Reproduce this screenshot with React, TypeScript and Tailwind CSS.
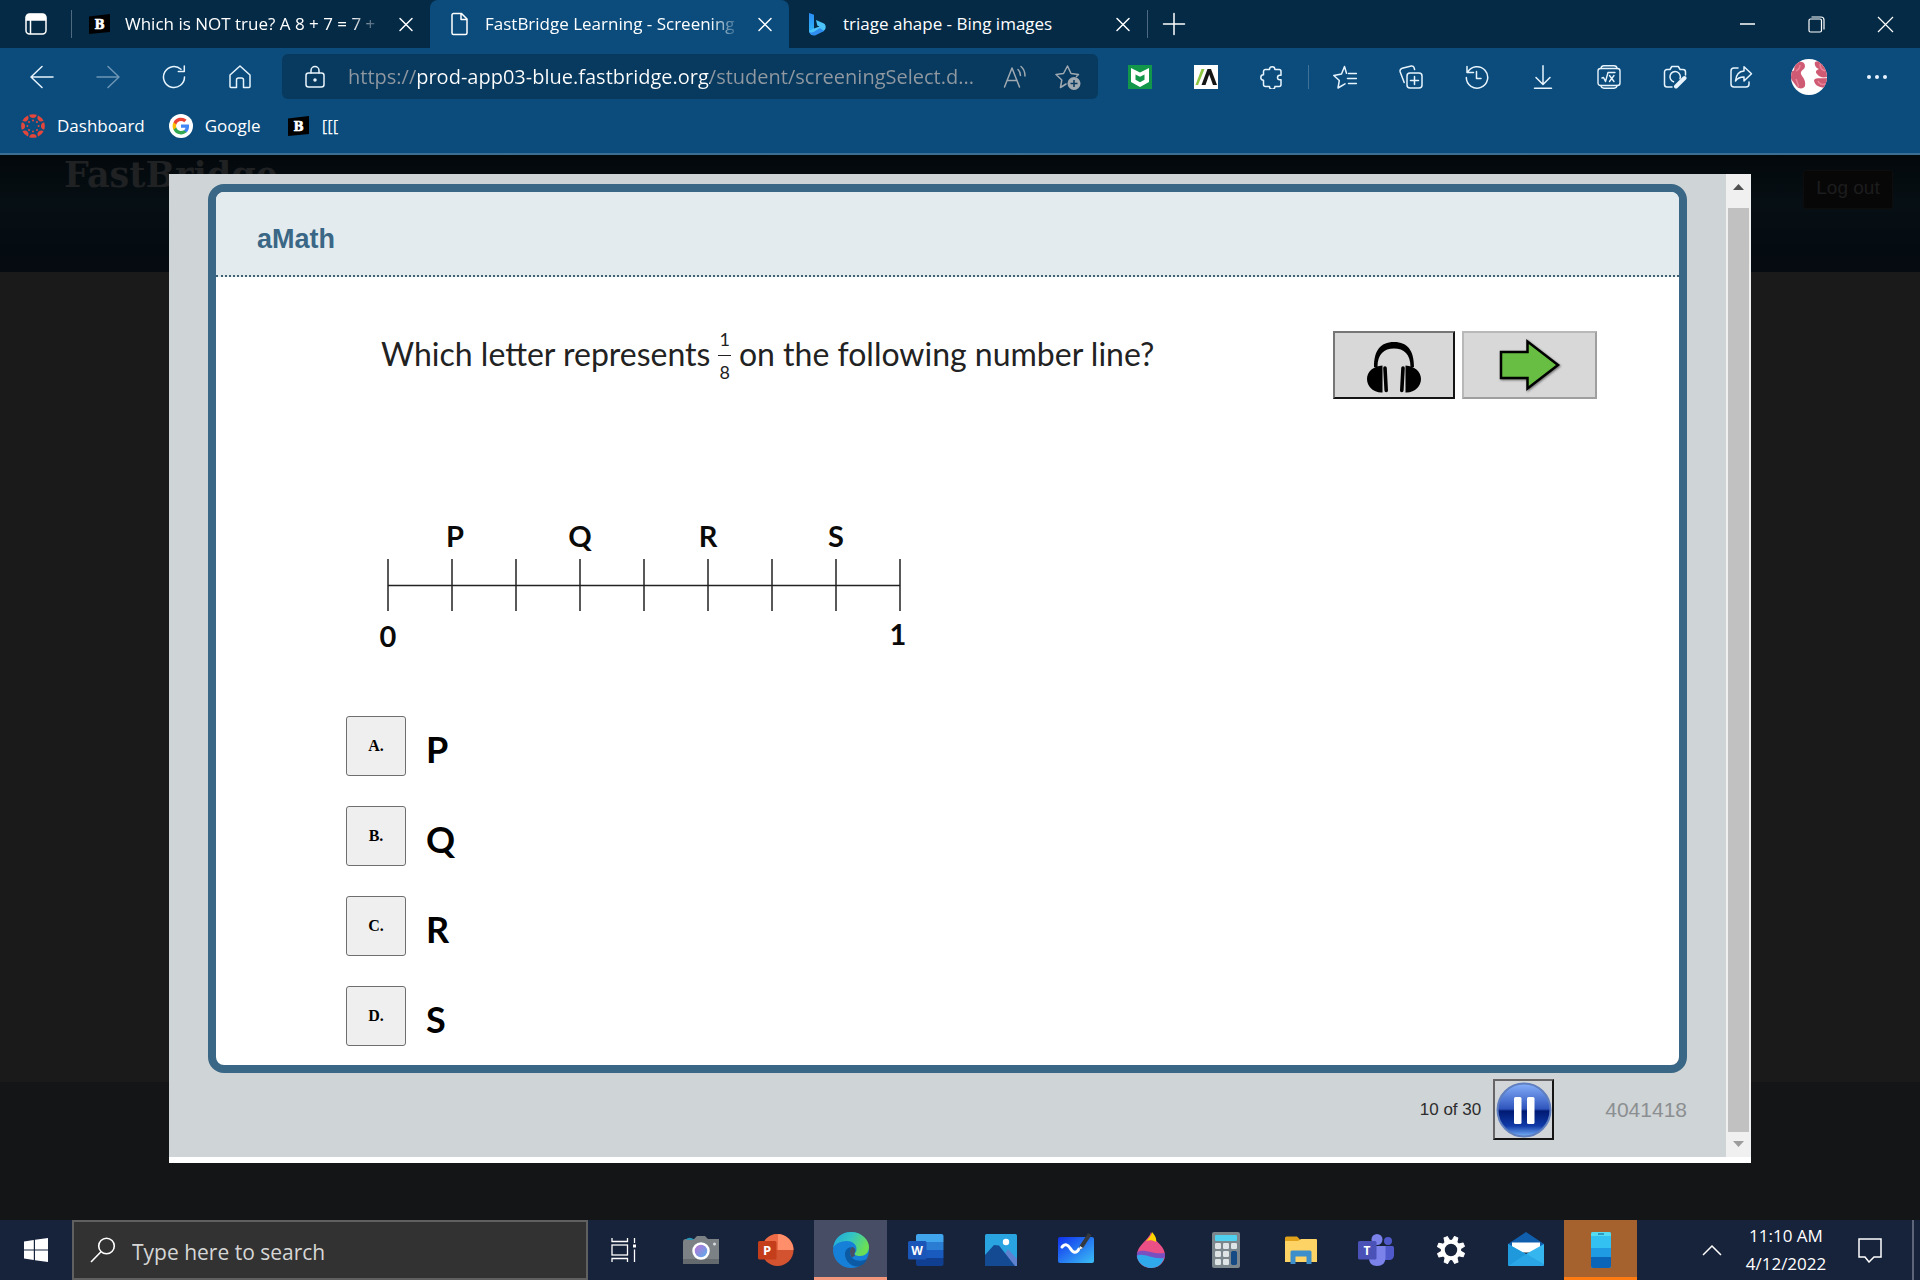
import React from "react";
import type { ReactNode } from "react";

const UI = "font-['Open_Sans','Noto_Sans',sans-serif]";

function Line({ children, size = 24, width = 1.5, box = 24 }: { children: ReactNode; size?: number; width?: number; box?: number }) {
  return (
    <svg width={size} height={size} viewBox={`0 0 ${box} ${box}`} fill="none" stroke="currentColor" strokeWidth={width} strokeLinecap="round" strokeLinejoin="round" aria-hidden="true">
      {children}
    </svg>
  );
}

function BrainlyMark() {
  return (
    <svg width="22" height="22" viewBox="0 0 22 22" className="shrink-0" aria-hidden="true">
      <path d="M0 3.500L21 1v18L0 21z" fill="#000" />
      <text x="10.500" y="15.500" textAnchor="middle" fontFamily="DejaVu Serif, serif" fontWeight="700" fontSize="12" fill="#fff" stroke="#fff" strokeWidth="0.6">B</text>
    </svg>
  );
}

function CloseX() {
  return (
    <Line size={24}>
      <path d="M6 6.500l12 12M18 6.500l-12 12" />
    </Line>
  );
}

function Tab({ icon, title, active, fade }: { icon: ReactNode; title: string; active?: boolean; fade?: boolean }) {
  return (
    <div
      role="tab"
      aria-selected={!!active}
      className={
        active
          ? "flex w-[359px] items-center rounded-t-lg bg-[#0b4c7c] pl-[18px] pr-3"
          : "flex w-[358px] items-center pl-[16px] pr-3"
      }
    >
      <span className="flex w-6 shrink-0 justify-center">{icon}</span>
      <span
        className={
          fade
            ? "ml-[13px] min-w-0 flex-1 whitespace-nowrap text-[17px] leading-6 text-white [mask-image:linear-gradient(90deg,#000_88%,transparent)]"
            : "ml-[14px] min-w-0 flex-1 whitespace-nowrap text-[17px] leading-6 text-white"
        }
      >
        {title}
      </span>
      <button type="button" aria-label={`Close ${title}`} className="ml-3 shrink-0 text-white">
        <CloseX />
      </button>
    </div>
  );
}

function TabStrip() {
  return (
    <div className="flex h-12 bg-[#052a46] text-white">
      <button type="button" aria-label="Tab actions" className="flex w-[71px] items-center justify-center">
        <svg width="24" height="24" viewBox="0 0 24 24" fill="none" stroke="#fff" strokeWidth="1.5" aria-hidden="true">
          <rect x="2" y="2" width="20" height="20" rx="3.500" />
          <path d="M2.500 8V5.500a3 3 0 0 1 3-3h13a3 3 0 0 1 3 3V8z" fill="#fff" />
          <path d="M6.500 8v14" />
        </svg>
      </button>
      <div className="my-[10px] w-px bg-[#4d6a80]" />
      <div role="tablist" className="flex">
        <Tab icon={<BrainlyMark />} title="Which is NOT true? A 8 + 7 = 7 +" fade />
        <Tab
          active
          fade
          title="FastBridge Learning - Screening"
          icon={
            <Line size={26}>
              <path d="M5.500 1.500h8l5.500 5.500v14a1.500 1.500 0 0 1-1.500 1.500h-12A1.500 1.500 0 0 1 4 21V3a1.500 1.500 0 0 1 1.500-1.500zM13 1.500V7.500h6" />
            </Line>
          }
        />
        <Tab
          title="triage ahape - Bing images"
          icon={
            <svg width="24" height="24" viewBox="0 0 24 24" aria-hidden="true">
              <defs>
                <linearGradient id="bing" x1="0" y1="0" x2="0" y2="1">
                  <stop offset="0" stopColor="#2b8df5" />
                  <stop offset="1" stopColor="#2fb7f8" />
                </linearGradient>
              </defs>
              <path d="M4 1l5 1.800v13.800L6 21.500 4 19z" fill="url(#bing)" />
              <path d="M11 8l8 3.500c2.500 2 2.200 6-.5 7.500L9 23c-2.500.5-4.500-1-5-4l5-2.500 5.500-2-2.200-1z" fill="#4cc4fa" />
              <path d="M4 19c1 2 3 2 5 .8L15 16l4 3-9 4.500C7 24 4.500 22 4 19z" fill="#2f8df0" />
            </svg>
          }
        />
      </div>
      <div className="my-[10px] w-px bg-[#4d6a80]" />
      <button type="button" aria-label="New tab" className="flex w-[52px] items-center justify-center">
        <Line>
          <path d="M12 1.500v21M1.500 12h21" />
        </Line>
      </button>
      <div className="ml-auto flex">
        <button type="button" aria-label="Minimize" className="flex w-[69px] items-center justify-center">
          <svg width="16" height="16" aria-hidden="true"><path d="M0 8h15" stroke="#fff" strokeWidth="1.500" /></svg>
        </button>
        <button type="button" aria-label="Restore" className="flex w-[69px] items-center justify-center">
          <svg width="17" height="17" fill="none" stroke="#fff" strokeWidth="1.2" aria-hidden="true">
            <rect x="1" y="3" width="12.500" height="13" rx="1.500" />
            <path d="M3.500 1h9.500a3 3 0 0 1 3 3v9.500" />
          </svg>
        </button>
        <button type="button" aria-label="Close window" className="flex w-[69px] items-center justify-center">
          <svg width="17" height="17" aria-hidden="true"><path d="M1 1l15 15M16 1L1 16" stroke="#fff" strokeWidth="1.2" /></svg>
        </button>
      </div>
    </div>
  );
}

function ToolButton({ label, children, dim }: { label: string; children: ReactNode; dim?: boolean }) {
  return (
    <button type="button" aria-label={label} className={dim ? "flex h-12 w-[66px] items-center justify-center text-[#6c95b5]" : "flex h-12 w-[66px] items-center justify-center text-[#e8f4fd]"}>
      {children}
    </button>
  );
}

function Toolbar() {
  return (
    <div className="flex h-[57px] items-center bg-[#0b4c7c] pl-[9px] pr-[10px]">
      <ToolButton label="Back"><Line><path d="M23 12H1M12 1.500L1 12l11 10.500" /></Line></ToolButton>
      <ToolButton label="Forward" dim><Line><path d="M1 12h22M12 1.500L23 12 12 22.500" /></Line></ToolButton>
      <ToolButton label="Refresh"><Line><path d="M22.500 12A10.500 10.500 0 1 1 19 4.200M22.300 1v5.500h-6" /></Line></ToolButton>
      <ToolButton label="Home"><Line><path d="M2 10L12 1l10 9v11.500a1 1 0 0 1-1 1h-5.500V15a2 2 0 0 0-2-2h-3a2 2 0 0 0-2 2v7.500H3a1 1 0 0 1-1-1z" /></Line></ToolButton>
      <div className="ml-[9px] flex h-[45px] min-w-0 flex-1 items-center rounded-md bg-[#08395e] pl-[21px] pr-[2px] text-[#9fa9b1]">
        <span className="text-[#e8f4fd]">
          <Line><rect x="3" y="8" width="18" height="14" rx="2.500" /><path d="M8 8V5.500a4 4 0 0 1 8 0V8" /><circle cx="12" cy="15" r="1" fill="currentColor" /></Line>
        </span>
        <input
          type="text"
          aria-label="Address"
          readOnly
          value="https://prod-app03-blue.fastbridge.org/student/screeningSelect.d..."
          className="ml-[21px] min-w-0 flex-1 bg-[linear-gradient(90deg,#9099a1_68px,#fff_68px,#fff_362px,#9099a1_362px)] bg-clip-text text-[20px] leading-7 text-transparent outline-none"
        />
        <button type="button" aria-label="Read aloud" className="flex w-[50px] justify-center">
          <Line><path d="M1.500 22L9 3l7.500 19M4.500 15.500h9M15 4.500c1.800 1.700 2.500 3.500 2.500 6M18 1.500c3 2.500 4 5.500 4 9.500" /></Line>
        </button>
        <button type="button" aria-label="Add to favorites" className="flex w-[56px] justify-center">
          <svg width="26" height="26" viewBox="0 0 26 26" fill="none" aria-hidden="true">
            <path d="M11 20l-5.500 3.500 1.300-7.500L1 10.500l7.500-1L12.500 2l3.500 7.500 7.500 1-2 2" stroke="currentColor" strokeWidth="1.5" strokeLinejoin="round" strokeLinecap="round" />
            <circle cx="19" cy="19.500" r="6.500" fill="currentColor" />
            <path d="M19 16v7M15.500 19.500h7" stroke="#08395e" strokeWidth="1.5" />
          </svg>
        </button>
      </div>
      <div className="ml-[9px] flex items-center">
        <ToolButton label="McAfee WebAdvisor">
          <svg width="24" height="24" viewBox="0 0 24 24" aria-hidden="true">
            <path d="M0 0h24v24H0z" fill="#12964a" />
            <path d="M3 3l9 4.500L21 3v14l-9 5-9-5z" fill="#fff" />
            <path d="M7.500 9.500l4.500 2.200 4.500-2.200v5.200L12 17.300l-4.500-2.600z" fill="#12964a" />
          </svg>
        </ToolButton>
        <ToolButton label="Reading extension">
          <svg width="24" height="24" viewBox="0 0 24 24" aria-hidden="true">
            <path d="M0 0h24v24H0z" fill="#fff" />
            <path d="M7.500 4h3L4 20H1.500z" fill="#8cc63f" />
            <path d="M13.500 4h3.500l6 16h-4l-3.800-10.500L11.500 20h-4z" fill="#151515" />
          </svg>
        </ToolButton>
        <ToolButton label="Extensions">
          <Line><path d="M5.500 4.500h4a2.700 2.700 0 0 1 5.400 0h4.100a2 2 0 0 1 2 2v3.700h-1.200a2.300 2.300 0 0 0 0 4.600H21v4.700a2 2 0 0 1-2 2h-4.100a2.700 2.700 0 0 1-5.400 0h-4a2 2 0 0 1-2-2v-4.300a2.700 2.700 0 0 1 0-5.400V6.500a2 2 0 0 1 2-2z" /></Line>
        </ToolButton>
        <div className="mx-[3px] h-6 w-px bg-[#3e7299]" />
        <ToolButton label="Favorites">
          <Line><path d="M13.500 8.200L11.500 1.500 8.500 9 .8 10.500l5.500 5L5 23l7-4.200M15.500 8.500h8M14.500 13.500h9M15.500 18.500h8" /></Line>
        </ToolButton>
        <ToolButton label="Collections">
          <Line><rect x="8" y="8" width="15" height="15" rx="3" /><path d="M15.500 11.500v8M11.500 15.500h8M5.200 17.500L1.200 7a3 3 0 0 1 2-3.800l9-2.200a2.500 2.500 0 0 1 3 2l.4 1.500" /></Line>
        </ToolButton>
        <ToolButton label="History">
          <Line><path d="M2.500 7.500A10.700 10.700 0 1 1 1.300 12.500M2 1.500v6h6.500M11.500 6.500v7h4.500" /></Line>
        </ToolButton>
        <ToolButton label="Downloads">
          <Line><path d="M12 .8v18M5 12.500l7 7 7-7M3.500 23.200h17" /></Line>
        </ToolButton>
        <ToolButton label="Math solver">
          <Line width={1.4}><rect x="1" y="3.500" width="22" height="17" rx="2.500" /><path d="M4 3.500a3 3 0 0 1 3-2.700h10a3 3 0 0 1 3 2.700M4 20.500a3 3 0 0 0 3 2.700h10a3 3 0 0 0 3-2.700M5 13l1.500-.5 2 4 2.500-9h7M12.500 10.500l4.500 6M17 10.500l-4.500 6" /></Line>
        </ToolButton>
        <ToolButton label="Web capture">
          <Line>
            <path d="M9 22H4a2.500 2.500 0 0 1-2.500-2.500V7A2.500 2.500 0 0 1 4 4.500h3l1.800-3h6.500l1.800 3H20A2.500 2.500 0 0 1 22.500 7v3M10.500 16.700a5.200 5.200 0 1 1 6.500-3" />
            <path d="M21.500 13L13 21.500" strokeWidth="4" />
          </Line>
        </ToolButton>
        <ToolButton label="Share">
          <Line><path d="M9 3H5a3 3 0 0 0-3 3v13a3 3 0 0 0 3 3h12a3 3 0 0 0 3-3v-2M15 1.800l7.500 7L15 16v-4c-4 0-6.500 1-8.500 4C7 10 10 6.300 15 6z" /></Line>
        </ToolButton>
      </div>
      <button type="button" aria-label="Profile" className="mx-[17px]">
        <svg width="36" height="36" viewBox="0 0 36 36" aria-hidden="true">
          <defs><clipPath id="avatar"><circle cx="18" cy="18" r="18" /></clipPath></defs>
          <g clipPath="url(#avatar)">
            <path d="M0 0h36v36H0z" fill="#fff" />
            <path d="M3 6c4-5 11-4 11 1 0 4-5 4-4 8 1 3 5 5 4 12-1 3-6 3-8 1L0 20v-8c3 1 4-2 3-6z" fill="#cf5a74" />
            <path d="M24 3c3-2 8 0 12 4v11c-4 1-8 0-10-3-2-2-1-4 2-5-3-1-5-4-4-7zM23 21c3-3 6-1 13-2v10c-6 0-13-2-13-8z" fill="#cf5a74" />
            <path d="M5 12c2-1 4-3 4-6M5 20c1 3 3 5 2 8M29 5c0 4 2 6 5 7M27 22c1 3 4 4 7 3" stroke="#ea8398" strokeWidth="1.500" fill="none" />
          </g>
        </svg>
      </button>
      <ToolButton label="Settings and more">
        <svg width="22" height="6" fill="currentColor" aria-hidden="true"><circle cx="3" cy="3" r="2" /><circle cx="11" cy="3" r="2" /><circle cx="19" cy="3" r="2" /></svg>
      </ToolButton>
    </div>
  );
}

function CanvasMark() {
  const wedges = [0, 45, 90, 135, 180, 225, 270, 315];
  return (
    <svg width="24" height="24" viewBox="-12 -12 24 24" fill="#e2463c" aria-hidden="true">
      {wedges.map((a) => (
        <g key={a} transform={`rotate(${a})`}>
          <path d="M-3.800-11.200a12 12 0 0 1 7.600 0A3.900 4.200 0 0 1-3.800-11.200z" />
          <circle cx="0" cy="-5.600" r="1" />
        </g>
      ))}
    </svg>
  );
}

function GoogleMark() {
  return (
    <svg width="24" height="24" viewBox="0 0 24 24" aria-hidden="true">
      <circle cx="12" cy="12" r="12" fill="#fff" />
      <g transform="translate(3.600 3.600) scale(.7)">
        <path d="M23.500 12.300c0-.8-.1-1.600-.2-2.300H12v4.500h6.500a5.500 5.500 0 0 1-2.400 3.600v3h3.900c2.200-2.100 3.500-5.200 3.500-8.800z" fill="#4285f4" />
        <path d="M12 24c3.200 0 6-1.100 8-2.900l-3.900-3c-1.100.7-2.500 1.200-4.100 1.200-3.100 0-5.800-2.100-6.700-5H1.300v3.100A12 12 0 0 0 12 24z" fill="#34a853" />
        <path d="M5.300 14.300a7 7 0 0 1 0-4.600V6.600h-4a12 12 0 0 0 0 10.800z" fill="#fbbc05" />
        <path d="M12 4.800c1.800 0 3.300.6 4.600 1.800L20 3.200A12 12 0 0 0 1.300 6.600l4 3.100c.9-2.900 3.600-4.900 6.700-4.900z" fill="#ea4335" />
      </g>
    </svg>
  );
}

function Bookmarks() {
  return (
    <nav className="flex h-[50px] items-center border-b-2 border-[#3d6e93] bg-[#0b4c7c] pb-[6px] pl-[21px] text-[17px] leading-6 text-white">
      <a href="#dashboard" className="flex items-center gap-3"><CanvasMark />Dashboard</a>
      <a href="#google" className="ml-6 flex items-center gap-3"><GoogleMark />Google</a>
      <a href="#brainly" className="ml-[27px] flex items-center gap-3"><BrainlyMark />[[[</a>
    </nav>
  );
}

const labels = [
  { x: 67, t: "P" },
  { x: 192, t: "Q" },
  { x: 320, t: "R" },
  { x: 448, t: "S" },
];

function NumberLine() {
  return (
    <svg width="540" height="136" viewBox="-12 0 540 136" className="block font-['Lato',sans-serif]" role="img" aria-label="Number line from 0 to 1">
      <g stroke="#222" strokeWidth="1.5">
        <path d="M0 66.500h512" />
        {Array.from({ length: 9 }, (_, i) => (
          <path key={i} d={`M${i * 64} 40v52`} />
        ))}
      </g>
      <g fontSize="29" fontWeight="700" textAnchor="middle" fill="#0a0a0a">
        {labels.map((l) => (
          <text key={l.t} x={l.x} y="28">{l.t}</text>
        ))}
        <text x="0" y="128">0</text>
        <text x="510" y="126">1</text>
      </g>
    </svg>
  );
}

const answers = [
  ["A.", "P"],
  ["B.", "Q"],
  ["C.", "R"],
  ["D.", "S"],
];

function Question() {
  return (
    <section className="mx-[39px] flex flex-1 flex-col overflow-hidden rounded-2xl border-8 border-[#3a6785] bg-white">
      <header className="border-b-2 border-dotted border-[#3f6272] bg-[#e3ebee] pb-5 pl-[41px] pt-[31px]">
        <h1 className="font-['Liberation_Sans',sans-serif] text-[27px] font-bold leading-8 text-[#3a6785]">aMath</h1>
      </header>
      <div className="flex flex-1 flex-col pb-4 pl-[130px] pr-[82px] pt-[42px]">
        <div className="flex items-start justify-between">
          <p className="flex items-center pl-[35px] font-['Lato',sans-serif] text-[32px] leading-[46px] text-[#222]">
            Which letter represents
            <span className="mx-2 flex flex-col items-center pt-1 text-[18px] leading-8">
              <span className="border-b border-[#222] px-px">1</span>
              <span>8</span>
            </span>
            on the following number line?
          </p>
          <div className="flex gap-[7px] pt-3">
            <button type="button" aria-label="Listen" className="flex h-[68px] w-[122px] items-center justify-center border-2 border-b-[#151515] border-l-[#767676] border-r-[#151515] border-t-[#767676] bg-[#d8d8d8]">
              <svg width="54" height="52" viewBox="0 0 54 52" className="mt-1" aria-hidden="true">
                <path d="M7 26C7 10 13 1 27 1s20 9 20 25h-3.500C43.500 13 37 7.500 27 7.500S10.500 13 10.500 26z" />
                <path d="M15.500 24.500v27C6 52 0 45 0 38s6-13 15.500-13.500zM38.500 24.500v27C48 52 54 45 54 38s-6-13-15.500-13.500z" />
                <path d="M18 27L19.200 49.500M36 27L34.800 49.500" stroke="#000" strokeWidth="3.600" strokeLinecap="round" />
              </svg>
            </button>
            <button type="button" aria-label="Next" className="flex h-[68px] w-[135px] items-center justify-center border-2 border-b-[#9f9f9f] border-l-[#b8b8b8] border-r-[#9f9f9f] border-t-[#b8b8b8] bg-[#d8d8d8]">
              <svg width="64" height="54" viewBox="0 0 64 54" className="drop-shadow-[1px_1px_1px_rgba(0,0,0,0.5)]" aria-hidden="true">
                <path d="M3 14h26.500V3.500L60 27 29.500 50.500V40H3z" fill="#67be43" stroke="#000" strokeWidth="2.500" />
              </svg>
            </button>
          </div>
        </div>
        <div className="pl-[30px] pt-[120px]">
          <NumberLine />
        </div>
        <ul className="mt-[61px] flex flex-col gap-[30px]">
          {answers.map(([key, text]) => (
            <li key={key} className="flex items-center">
              <button type="button" aria-label={`Answer ${key}`} className="h-[60px] w-[60px] rounded-[3px] border border-[#6f6f6f] bg-[#efefef] font-['Liberation_Serif',serif] text-[16px] font-bold leading-5 text-black">{key}</button>
              <span className="ml-5 pt-[6px] font-['Lato',sans-serif] text-[36px] font-bold leading-10 text-black">{text}</span>
            </li>
          ))}
        </ul>
      </div>
    </section>
  );
}

function PageArea() {
  return (
    <main className="grid flex-1 bg-[#1a1a1a]">
      <div className="col-start-1 row-start-1 flex flex-col bg-[linear-gradient(0deg,#131517_138px,#1a1a1a_138px)]" aria-hidden="true">
        <div className="flex h-[117px] items-start justify-between bg-[linear-gradient(180deg,#03080b,#060f14_40%,#050b10)] pl-[64px] pr-[27px]">
          <span className="pt-[2px] font-['DejaVu_Serif',serif] text-[35px] font-bold leading-9 text-[#1f2123]">FastBridge</span>
          <span className="mt-[15px] flex h-[39px] w-[90px] items-center justify-center rounded-[3px] border border-[#0e0d0d] bg-[#080707] pb-1 font-['Liberation_Sans',sans-serif] text-[19px] leading-6 text-[#1c1d1e]">Log out</span>
        </div>
      </div>
      <div className="z-10 col-start-1 row-start-1 mx-[169px] mb-[57px] mt-[19px] flex border-b-[6px] border-white bg-[#cfd4d6]">
        <div className="flex min-w-0 flex-1 flex-col pt-[10px]">
          <Question />
          <footer className="flex items-center justify-end pb-[17px] pr-[39px] pt-[6px] font-['Liberation_Sans',sans-serif]">
            <span className="text-[17px] leading-6 text-[#2d2d2d]">10 of 30</span>
            <button type="button" aria-label="Pause" className="ml-3 flex h-[61px] w-[61px] items-center justify-center border-2 border-b-[#151515] border-l-[#666] border-r-[#151515] border-t-[#666] bg-[#d3d6d9]">
              <svg width="56" height="56" viewBox="0 0 56 56" aria-hidden="true">
                <defs>
                  <linearGradient id="ball" x1="0" y1="0" x2="0" y2="1">
                    <stop offset="0" stopColor="#86b0fa" />
                    <stop offset=".48" stopColor="#2f55bd" />
                    <stop offset=".52" stopColor="#001a72" />
                    <stop offset=".8" stopColor="#103aa8" />
                    <stop offset="1" stopColor="#79b5fb" />
                  </linearGradient>
                </defs>
                <circle cx="28" cy="28" r="26.500" fill="url(#ball)" stroke="#5f7fbe" strokeWidth="2" />
                <rect x="18" y="15" width="7.500" height="27" rx="1.500" fill="#fff" />
                <rect x="31" y="15" width="7.500" height="27" rx="1.500" fill="#fff" />
              </svg>
            </button>
            <span className="ml-[51px] text-right text-[21px] leading-6 text-[#8c8f91]">4041418</span>
          </footer>
        </div>
        <div className="flex w-[25px] flex-col items-center bg-[#f0f0f0]" role="scrollbar" aria-orientation="vertical" aria-controls="root" aria-valuenow={0}>
          <svg width="25" height="34" viewBox="0 0 25 34" aria-hidden="true"><path d="M7 16l5.500-6 5.500 6z" fill="#505050" /></svg>
          <div className="w-[21px] flex-1 bg-[#c1c1c1]" />
          <svg width="25" height="25" viewBox="0 0 25 25" aria-hidden="true"><path d="M7 9h11l-5.500 6z" fill="#9c9c9c" /></svg>
        </div>
      </div>
    </main>
  );
}

const apps: { name: string; art: ReactNode; tone?: "edge" | "phone" }[] = [
  {
    name: "Task View",
    art: (
      <g fill="none" stroke="#fff" strokeWidth="1.300">
        <rect x="4" y="13" width="15.500" height="10" />
        <path d="M4 6v3.500h15.500V6M4 30v-3.500h15.500V30M26.500 6v5M26.500 17.500V30" />
        <path d="M25 12.500h3v3h-3z" fill="#fff" stroke="none" />
      </g>
    ),
  },
  {
    name: "Camera",
    art: (
      <>
        <path d="M0 10c0-2 1-3 3-3h8l3-3h8l3 3h11v25H0z" fill="#7c8185" />
        <path d="M0 27h36v5H0z" fill="#656a6e" />
        <path d="M3 8c1-3 6-3 8 0z" fill="#2b95b8" />
        <circle cx="18" cy="19" r="7.500" fill="url(#lens)" stroke="#fff" strokeWidth="2.500" />
        <circle cx="31.500" cy="12" r="1.500" fill="#d7dade" />
      </>
    ),
  },
  {
    name: "PowerPoint",
    art: (
      <>
        <circle cx="19.500" cy="18" r="16" fill="#d35230" />
        <path d="M19.500 2a16 16 0 0 1 16 16h-16z" fill="#ff8f6b" />
        <path d="M19.500 2v16h-16a16 16 0 0 1 16-16z" fill="#ed6c47" />
        <rect x="0" y="9" width="18.500" height="18.500" rx="1.500" fill="#c43e1c" />
        <text x="9" y="23" textAnchor="middle" fontSize="13" fontWeight="700" fill="#fff">P</text>
      </>
    ),
  },
  {
    name: "Microsoft Edge",
    tone: "edge",
    art: (
      <>
        <circle cx="18" cy="18" r="18" fill="#1680d8" />
        <path d="M.3 16C1 6 9 0 18 0c11 0 18 8 18 15 0 6-4 9-9 9-4 0-6-1-5-3 1-1 1.500-2 1.500-4C23.500 12 19 9 14 9 7 9 2 12 .3 16z" fill="url(#edge)" />
        <path d="M12 22c0 7 6 13 13 12.500 4-.5 8-4 9-7.500-8 4-17 1-17-7 0-2 .5-3.500 2-5-4 0-7 3-7 7z" fill="#0c59a4" />
        <path d="M17 19.500c0-2 1-3.500 2.500-4.500 2 .5 3.500 2.500 2.500 5-.7 1.500-1 2 0 3.500l-3 2c-1.200-1.500-2-3.500-2-6z" fill="#474d64" />
      </>
    ),
  },
  {
    name: "Word",
    art: (
      <>
        <path d="M8 4a2 2 0 0 1 2-2h23.500a2 2 0 0 1 2 2v6H8z" fill="#41a5ee" />
        <path d="M8 10h27.500v8H8z" fill="#2b7cd3" />
        <path d="M8 18h27.500v8H8z" fill="#185abd" />
        <path d="M8 26h27.500v6a2 2 0 0 1-2 2H10a2 2 0 0 1-2-2z" fill="#103f91" />
        <rect x="0" y="9" width="18.500" height="18.500" rx="1.500" fill="#1a56b8" />
        <text x="9" y="22.500" textAnchor="middle" fontSize="12" fontWeight="700" fill="#fff">W</text>
      </>
    ),
  },
  {
    name: "Photos",
    art: (
      <>
        <rect x="2" y="2" width="32" height="32" rx="1.500" fill="#2aa4e0" />
        <path d="M14 34l11-17 9 10v7z" fill="#5f82d0" />
        <path d="M2 23l9-10 5 .5L32 34H2z" fill="#134a92" />
        <circle cx="23" cy="10" r="3.200" fill="#fff" />
      </>
    ),
  },
  {
    name: "Whiteboard",
    art: (
      <>
        <rect x="0" y="5" width="36" height="26" rx="2" fill="url(#board)" />
        <path d="M4 15c3-4 6-2 8 1 3 5 6 6 9 1" fill="none" stroke="#fff" strokeWidth="3" strokeLinecap="round" />
        <path d="M22 18l-.5-4L30 1l3.500 2L25 16z" fill="#35383c" />
        <path d="M21 18l1-4 3 2z" fill="#e9edf0" />
      </>
    ),
  },
  {
    name: "Paint 3D",
    art: (
      <>
        <path d="M18 0c1 8 14 13 14 23a14 13 0 0 1-28 0C4 13 16 8 18 0z" fill="#ea4f86" />
        <path d="M19 0c3 3 5 7 4 10-3-2-7-2-10-1 3-3 5-5 6-9z" fill="#ffd400" />
        <path d="M4.500 20c7-4 15 3 27.500 1v4c-8 6-18 0-28 1-.5-3 0-4 .5-6z" fill="#7a4fc0" />
        <path d="M4 23.500c7-3 15 4 27 2.500-1.500 6-6.500 10-13 10S4 31 4 23.500z" fill="#2fa9ec" />
      </>
    ),
  },
  {
    name: "Calculator",
    art: (
      <>
        <rect x="4" y="0" width="28" height="36" rx="2" fill="#7b868d" />
        <rect x="7" y="3" width="22" height="6" rx="1" fill="#4fd0ee" />
        {[11, 19, 27].map((y) =>
          [7, 15, 23].map((x) => <rect key={`${x}-${y}`} x={x} y={y} width="6" height="6" rx="1.200" fill="#dfe4e7" />)
        )}
        <rect x="23" y="19" width="6" height="14" rx="1.200" fill="#154a84" />
      </>
    ),
  },
  {
    name: "File Explorer",
    art: (
      <>
        <path d="M2 6a1.500 1.500 0 0 1 1.500-1.500H14l3 3v4H2z" fill="#e0a11b" />
        <path d="M2 9h13l3-2h15a1 1 0 0 1 1 1v22H2z" fill="#fdd365" />
        <path d="M7.500 32V20a1.500 1.500 0 0 1 1.500-1.500h18a1.500 1.500 0 0 1 1.500 1.500v12h-5v-7.500h-11V32z" fill="#3c8fcb" />
      </>
    ),
  },
  {
    name: "Teams",
    art: (
      <>
        <circle cx="30" cy="9" r="4" fill="#5059c9" />
        <path d="M24 14h10.500a1.500 1.500 0 0 1 1.500 1.500V23c0 3-2 5-5 5h-7z" fill="#5059c9" />
        <circle cx="19" cy="7.500" r="5.500" fill="#7b83eb" />
        <path d="M11 14h16.500v12c0 5-3.500 8-8.500 8s-8-3-8-8z" fill="#7b83eb" />
        <rect x="0" y="9" width="18.500" height="18.500" rx="1.500" fill="#4a52b8" />
        <text x="9" y="22.500" textAnchor="middle" fontSize="12" fontWeight="700" fill="#fff">T</text>
      </>
    ),
  },
  {
    name: "Settings",
    art: (
      <>
        <circle cx="18" cy="18" r="8.200" fill="none" stroke="#fff" strokeWidth="4" />
        {[22, 67, 112, 157, 202, 247, 292, 337].map((a) => (
          <path key={a} d="M15.500 8.500l.7-4.300h3.600l.7 4.300z" fill="#fff" stroke="#fff" strokeLinejoin="round" transform={`rotate(${a} 18 18)`} />
        ))}
      </>
    ),
  },
  {
    name: "Mail",
    art: (
      <>
        <path d="M0 12L18 0l18 12v6H0z" fill="#0f5fae" />
        <path d="M4 10.500h28v10H4z" fill="#fff" />
        <path d="M0 12l18 10 18-10v20a2 2 0 0 1-2 2H2a2 2 0 0 1-2-2z" fill="#36b6ee" />
        <path d="M0 12l36 20.500c0 .8-.7 1.500-2 1.500H2a2 2 0 0 1-2-2z" fill="#1f98dc" />
        <path d="M18 22L0 34c0 0 .5 0 2 0h32c1.300 0 2-.7 2-1.500z" fill="#2aa5e5" />
      </>
    ),
  },
  {
    name: "Your Phone",
    tone: "phone",
    art: (
      <>
        <rect x="8" y="0" width="20" height="36" rx="2" fill="#33c1f2" />
        <path d="M8 4V2a2 2 0 0 1 2-2h16a2 2 0 0 1 2 2v2z" fill="#55dcf2" />
        <path d="M8 16h20v9H8z" fill="#1e9be2" />
        <path d="M8 25h20v9a2 2 0 0 1-2 2H10a2 2 0 0 1-2-2z" fill="#0a64b8" />
        <path d="M15 2h6" stroke="#136c9e" strokeWidth="1.200" />
      </>
    ),
  },
];

function tileClass(tone?: "edge" | "phone") {
  if (tone === "edge") return "flex w-[73px] items-center justify-center border-b-[3px] border-[#f2977b] bg-[#474d64] pt-[3px]";
  if (tone === "phone") return "flex w-[73px] items-center justify-center border-b-[3px] border-[#ff7a10] bg-[#a5622f] pt-[3px]";
  return "flex w-[73px] items-center justify-center";
}

function Taskbar() {
  return (
    <footer className="flex h-[60px] bg-[#17223b] text-white">
      <button type="button" aria-label="Start" className="flex w-[72px] items-center justify-center">
        <svg width="24" height="24" viewBox="0 0 24 24" fill="#fff" aria-hidden="true">
          <path d="M0 3.400L9.800 2v9.500H0zM11 1.800L24 0v11.500H11zM0 12.500h9.800V22L0 20.600zM11 12.500h13V24l-13-1.800z" />
        </svg>
      </button>
      <label className="flex w-[516px] items-center border-2 border-[#606060] bg-[#323232] pl-4">
        <svg width="26" height="26" viewBox="0 0 26 26" fill="none" stroke="#fff" strokeWidth="1.600" aria-hidden="true">
          <circle cx="16.500" cy="9" r="7.800" />
          <path d="M11 14.700L1 25" />
        </svg>
        <input type="search" aria-label="Type here to search" placeholder="Type here to search" className="ml-4 min-w-0 flex-1 bg-transparent pt-1 text-[21px] leading-7 text-white outline-none placeholder:text-[#d6d6d6]" />
      </label>
      <div className="ml-px flex gap-[2px]">
        {apps.map((a) => (
          <button key={a.name} type="button" aria-label={a.name} className={tileClass(a.tone)}>
            <svg width="36" height="36" viewBox="0 0 36 36" className="font-['Open_Sans',sans-serif]" aria-hidden="true">{a.art}</svg>
          </button>
        ))}
      </div>
      <div className="ml-auto flex items-center">
        <button type="button" aria-label="Show hidden icons" className="flex w-8 justify-center">
          <svg width="20" height="12" fill="none" stroke="#fff" strokeWidth="1.500" aria-hidden="true"><path d="M1 11l9-9 9 9" /></svg>
        </button>
        <div className="ml-2 flex w-[100px] flex-col items-center text-[17px] leading-7">
          <span>11:10 AM</span>
          <span>4/12/2022</span>
        </div>
        <button type="button" aria-label="Notifications" className="ml-[22px] flex w-6 justify-center">
          <svg width="24" height="25" fill="none" stroke="#fff" strokeWidth="1.500" aria-hidden="true"><path d="M1 1h22v18h-7l-5 5-4-5H1z" /></svg>
        </button>
        <div className="ml-[30px] mr-[6px] h-[60px] w-[2px] bg-[#5d657a]" />
      </div>
      <svg width="0" height="0" aria-hidden="true">
        <defs>
          <linearGradient id="lens" x1="0" y1="0" x2="1" y2="1"><stop offset="0" stopColor="#c56ad0" /><stop offset="1" stopColor="#4fb5ef" /></linearGradient>
          <linearGradient id="edge" x1="0" y1="0" x2="1" y2=".4"><stop offset="0" stopColor="#1fa5dd" /><stop offset=".5" stopColor="#33c4c4" /><stop offset="1" stopColor="#6ade55" /></linearGradient>
          <linearGradient id="board" x1="0" y1="0" x2="1" y2="1"><stop offset="0" stopColor="#1030ee" /><stop offset="1" stopColor="#3bbff5" /></linearGradient>
        </defs>
      </svg>
    </footer>
  );
}

export default function App() {
  return (
    <div className={`flex min-h-screen flex-col ${UI}`}>
      <TabStrip />
      <Toolbar />
      <Bookmarks />
      <PageArea />
      <Taskbar />
    </div>
  );
}
